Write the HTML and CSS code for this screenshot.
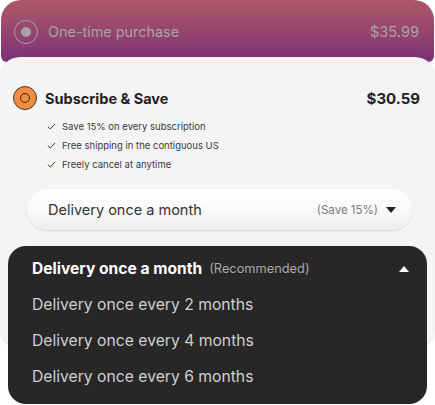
FILE: index.html
```html
<!DOCTYPE html>
<html>
<head>
<meta charset="utf-8">
<link rel="stylesheet" href="styles.css">
</head>
<body>
<div class="page">
  <div class="onetime">
    <span class="radio-off"><span class="dot"></span></span>
    <span class="ot-label">One-time purchase</span>
    <span class="ot-price">$35.99</span>
  </div>
  <div class="card">
    <div class="sub-row">
      <span class="radio-on"><span class="ring"></span></span>
      <span class="sub-label">Subscribe &amp; Save</span>
      <span class="sub-price">$30.59</span>
    </div>
    <ul class="checks">
      <li><svg class="chk" viewBox="0 0 10 8" width="9" height="7"><path d="M0.8 4.2 L3.6 6.8 L9.2 1" fill="none" stroke="#333" stroke-width="1.1"/></svg>Save 15% on every subscription</li>
      <li><svg class="chk" viewBox="0 0 10 8" width="9" height="7"><path d="M0.8 4.2 L3.6 6.8 L9.2 1" fill="none" stroke="#333" stroke-width="1.1"/></svg>Free shipping in the contiguous US</li>
      <li><svg class="chk" viewBox="0 0 10 8" width="9" height="7"><path d="M0.8 4.2 L3.6 6.8 L9.2 1" fill="none" stroke="#333" stroke-width="1.1"/></svg>Freely cancel at anytime</li>
    </ul>
    <div class="select">
      <span class="sel-label">Delivery once a month</span>
      <span class="sel-save">(Save 15%)</span>
      <svg class="tri" viewBox="0 0 10 6" width="10" height="6"><path d="M0 0 H10 L5 6 Z" fill="#222"/></svg>
    </div>
  </div>
  <div class="menu">
    <div class="menu-item active">
      <span class="mi-bold">Delivery once a month</span>
      <span class="mi-rec">(Recommended)</span>
      <svg class="tri-up" viewBox="0 0 10 6" width="10" height="6"><path d="M0 6 H10 L5 0 Z" fill="#fff"/></svg>
    </div>
    <div class="menu-item">Delivery once every 2 months</div>
    <div class="menu-item">Delivery once every 4 months</div>
    <div class="menu-item">Delivery once every 6 months</div>
  </div>
</div>
</body>
</html>
```
FILE: styles.css
```css
* { box-sizing: border-box; }
html, body { margin: 0; padding: 0; background: #fff; }
body { font-family: Inter, "Noto Sans", sans-serif; width: 435px; height: 405px; overflow: hidden; }
.page { position: relative; width: 435px; height: 405px; }

.onetime {
  margin: 0 1px;
  height: 62px;
  padding: 20px 15px 0 13px;
  display: flex;
  align-items: flex-start;
  border-radius: 20px 20px 6px 6px;
  background: linear-gradient(180deg, #ad5767 0%, #9b4a6c 40%, #7a2f78 100%);
}
.radio-off {
  width: 24px; height: 24px;
  border: 1.5px solid #a9a2a8;
  border-radius: 50%;
  display: flex; align-items: center; justify-content: center;
  flex: none;
}
.radio-off .dot { width: 10px; height: 10px; border-radius: 50%; background: #a9a2a8; }
.ot-label { margin-left: 10px; font-size: 14.4px; color: #a9a2a8; line-height: 24px; }
.ot-price { margin-left: auto; font-size: 14.6px; color: #a9a2a8; line-height: 24px; }

.card {
  margin-top: -5px;
  height: 290px;
  background: #f4f4f4;
  border-radius: 20px;
  box-shadow: 0 1px 3px rgba(0,0,0,0.12);
  padding: 29px 15px 0 13px;
}
.sub-row { display: flex; align-items: center; height: 24px; }
.radio-on {
  width: 24px; height: 24px; border-radius: 50%;
  background: #f58d3e; border: 1px solid #3a3a3a;
  display: flex; align-items: center; justify-content: center; flex: none;
}
.radio-on .ring { width: 10px; height: 10px; border-radius: 50%; border: 1.6px solid #2a2a2a; }
.sub-label { margin-left: 8px; font-size: 14.5px; font-weight: 700; color: #1f1f1f; }
.sub-price { margin-left: auto; font-size: 15px; font-weight: 700; color: #1f1f1f; }

.checks { list-style: none; margin: 7px 0 0 34px; padding: 0; }
.checks li { display: flex; align-items: center; height: 19px; font-size: 9.5px; color: #3a3a3a; }
.chk { margin-right: 6px; flex: none; }

.select {
  margin: 15px 8px 0 14px;
  height: 41px;
  border-radius: 21px;
  background: linear-gradient(180deg, #ffffff 0%, #f9f9f9 50%, #eeeeee 100%);
  box-shadow: 0 1px 2px rgba(0,0,0,0.12);
  display: flex; align-items: center;
  padding: 0 16px 0 21px;
}
.sel-label { font-size: 14.5px; color: #333; }
.sel-save { margin-left: auto; font-size: 11.5px; color: #7a7a7a; }
.tri { margin-left: 8px; }

.menu {
  position: absolute;
  left: 8px; top: 246px;
  width: 419px; height: 158px;
  background: #272727;
  border-radius: 18px;
  padding: 10px 18px 0 24px;
}
.menu-item { height: 36px; display: flex; align-items: center; font-size: 15.7px; color: #cfcfcf; }
.menu-item.active { height: 25px; margin-bottom: 5px; }
.mi-bold { font-size: 15.6px; font-weight: 700; color: #fff; }
.mi-rec { margin-left: 7px; font-size: 12.8px; color: #a8a8a8; }
.tri-up { margin-left: auto; }
```
